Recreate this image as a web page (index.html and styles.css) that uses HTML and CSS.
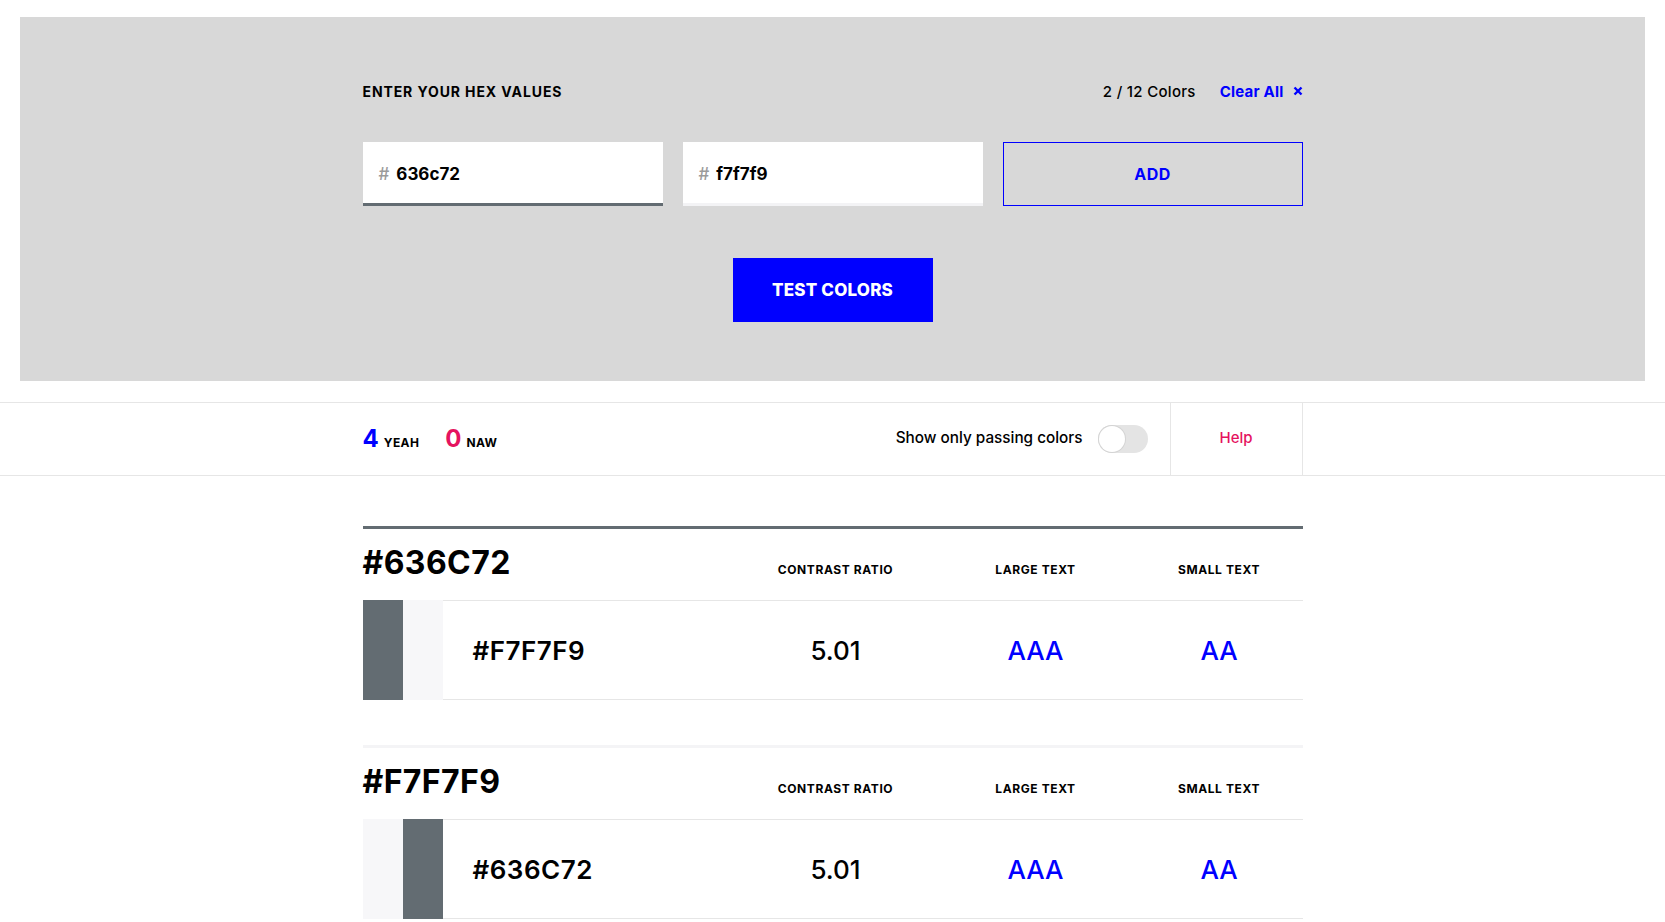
FILE: index.html
```html
<!DOCTYPE html>
<html lang="en">
<head>
<meta charset="utf-8">
<title>Color contrast tester</title>
<link rel="stylesheet" href="styles.css">
</head>
<body>
<section class="panel">
  <div class="wrap">
    <div class="panel-head">
      <h2 class="label">ENTER YOUR HEX VALUES</h2>
      <div class="panel-meta">
        <span class="count">2 / 12 Colors</span>
        <a class="clear" href="#">Clear All
          <svg class="x-icon" viewBox="0 0 10 10" width="10" height="10"><path d="M1.5 1.5 L8.5 8.5 M8.5 1.5 L1.5 8.5" stroke="#0000ff" stroke-width="2.4" fill="none"/></svg>
        </a>
      </div>
    </div>
    <div class="inputs">
      <div class="field field-dark"><span class="hash">#</span><span class="val">636c72</span></div>
      <div class="field field-light"><span class="hash">#</span><span class="val">f7f7f9</span></div>
      <button class="add">ADD</button>
    </div>
    <button class="test">TEST COLORS</button>
  </div>
</section>

<section class="bar">
  <div class="wrap bar-inner">
    <div class="stats">
      <span class="stat"><span class="num yeah">4</span><span class="word">YEAH</span></span>
      <span class="stat"><span class="num naw">0</span><span class="word">NAW</span></span>
    </div>
    <div class="bar-right">
      <span class="filter">Show only passing colors</span>
      <span class="toggle"><span class="knob"></span></span>
      <a class="help" href="#">Help</a>
    </div>
  </div>
</section>

<main class="wrap results">
  <section class="block block-dark">
    <div class="block-head">
      <h3 class="hex">#636C72</h3>
      <span class="col">CONTRAST RATIO</span>
      <span class="col">LARGE TEXT</span>
      <span class="col">SMALL TEXT</span>
    </div>
    <div class="row">
      <div class="swatches"><span class="sw sw-dark"></span><span class="sw sw-light"></span></div>
      <div class="row-body">
        <span class="rhex">#F7F7F9</span>
        <span class="ratio">5.01</span>
        <span class="grade">AAA</span>
        <span class="grade">AA</span>
      </div>
    </div>
  </section>

  <section class="block block-light">
    <div class="block-head">
      <h3 class="hex">#F7F7F9</h3>
      <span class="col">CONTRAST RATIO</span>
      <span class="col">LARGE TEXT</span>
      <span class="col">SMALL TEXT</span>
    </div>
    <div class="row">
      <div class="swatches"><span class="sw sw-light"></span><span class="sw sw-dark"></span></div>
      <div class="row-body">
        <span class="rhex">#636C72</span>
        <span class="ratio">5.01</span>
        <span class="grade">AAA</span>
        <span class="grade">AA</span>
      </div>
    </div>
  </section>
</main>
</body>
</html>
```

FILE: styles.css
```css
* { box-sizing: border-box; }

body {
  margin: 0;
  font-family: Inter, "Noto Sans", sans-serif;
  color: #000;
  background: #fff;
}

a { text-decoration: none; }

.wrap {
  width: 940px;
  margin: 0 auto;
}

/* ---------- top panel ---------- */
.panel {
  margin: 17px 20px 0;
  background: #d8d8d8;
  padding: 64px 0 59px;
}

.panel-head {
  display: flex;
  justify-content: space-between;
  align-items: center;
  height: 20px;
}

.label {
  margin: 0;
  font-size: 14px;
  font-weight: 700;
  letter-spacing: 0.9px;
}

.panel-meta {
  display: flex;
  align-items: center;
  gap: 24px;
  font-size: 15px;
}

.count {
  font-weight: 500;
  letter-spacing: 0.3px;
}

.clear {
  color: #0000ff;
  font-weight: 700;
  display: flex;
  align-items: center;
  gap: 9px;
  letter-spacing: 0.2px;
}

.x-icon { display: block; }

.inputs {
  display: grid;
  grid-template-columns: repeat(3, 1fr);
  gap: 20px;
  margin-top: 41px;
}

.field {
  height: 64px;
  background: #fff;
  border-bottom: 3px solid #f2f2f4;
  display: flex;
  align-items: center;
  padding: 2px 0 0 16px;
  font-size: 17px;
  font-weight: 700;
}

.field-dark { border-bottom-color: #636c72; }
.field-light { border-bottom-color: #f3f3f5; }

.hash {
  color: #9b9b9b;
  font-weight: 500;
  margin-right: 7px;
}

.add {
  height: 64px;
  background: transparent;
  border: 1px solid #0000ff;
  color: #0000ff;
  font-family: inherit;
  font-size: 16px;
  font-weight: 700;
  letter-spacing: 0.5px;
}

.test {
  display: block;
  margin: 52px auto 0;
  width: 200px;
  height: 64px;
  border: 0;
  background: #0000ff;
  color: #fff;
  font-family: inherit;
  font-size: 17px;
  font-weight: 800;
  letter-spacing: 0.2px;
}

/* ---------- stats bar ---------- */
.bar {
  margin-top: 21px;
  border-top: 1px solid #e6e6e6;
  border-bottom: 1px solid #e6e6e6;
}

.bar-inner {
  display: flex;
  justify-content: space-between;
  align-items: stretch;
  height: 72px;
}

.stats {
  display: flex;
  align-items: center;
  gap: 26px;
  padding-bottom: 1px;
}

.stat {
  display: flex;
  align-items: baseline;
  gap: 5px;
}

.num {
  font-size: 24px;
  font-weight: 700;
  line-height: 1;
}

.yeah { color: #0000ff; }
.naw { color: #e5135f; }

.word {
  font-size: 12px;
  font-weight: 700;
  letter-spacing: 0.4px;
}

.bar-right {
  display: flex;
  align-items: center;
}

.filter {
  font-size: 15.3px;
  font-weight: 500;
  padding-bottom: 3px;
}

.toggle {
  width: 50px;
  height: 28px;
  border-radius: 14px;
  background: #e4e4e4;
  margin: 0 22px 0 15px;
  padding: 1px;
  display: flex;
}

.knob {
  width: 26px;
  height: 26px;
  border-radius: 50%;
  background: #fff;
  box-shadow: 0 0 0 1px #d4d4d4;
}

.help {
  align-self: stretch;
  width: 133px;
  border-left: 1px solid #e6e6e6;
  border-right: 1px solid #e6e6e6;
  display: flex;
  align-items: center;
  justify-content: center;
  padding-bottom: 3px;
  color: #e5135f;
  font-size: 15px;
  font-weight: 500;
}

/* ---------- results ---------- */
.results { margin-top: 50px; }

.block { border-top: 3px solid #636c72; }
.block-light { border-top-color: #f4f4f6; margin-top: 45px; }

.block-head,
.row-body {
  display: grid;
  align-items: baseline;
}

.block-head {
  grid-template-columns: 373px 200px 200px 167px;
  padding: 18px 0 21px;
}

.hex {
  margin: 0;
  font-size: 32px;
  line-height: 32px;
  font-weight: 700;
  letter-spacing: 0.4px;
}

.col {
  text-align: center;
  font-size: 12px;
  font-weight: 700;
  letter-spacing: 0.6px;
}

.row {
  display: flex;
  height: 100px;
}

.swatches { display: flex; }

.sw {
  width: 40px;
  height: 100%;
}

.sw-dark { background: #636c72; }
.sw-light { background: #f7f7f9; }

.row-body {
  flex: 1;
  grid-template-columns: 293px 200px 200px 167px;
  align-items: center;
  border-top: 1px solid #e6e6e6;
  border-bottom: 1px solid #e6e6e6;
  font-size: 26px;
}

.rhex {
  padding-left: 30px;
  font-weight: 600;
  letter-spacing: 0.5px;
}

.ratio,
.grade {
  text-align: center;
  font-weight: 500;
}

.grade { color: #0000ff; }
```
